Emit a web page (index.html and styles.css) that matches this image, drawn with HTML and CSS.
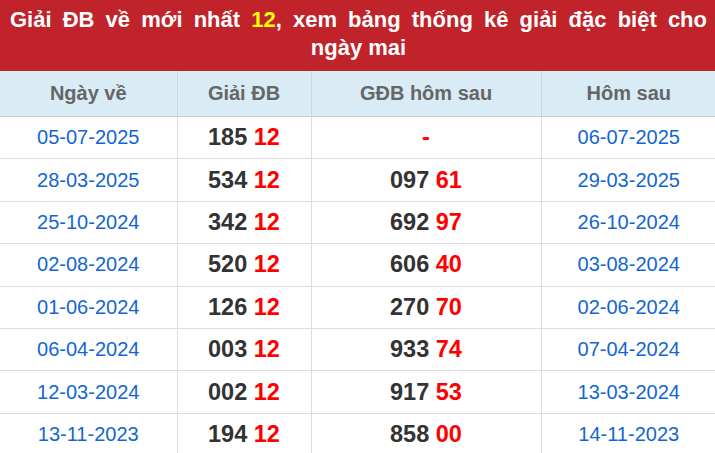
FILE: index.html
```html
<!DOCTYPE html>
<html lang="vi">
<head>
<meta charset="utf-8">
<title>Giải ĐB về mới nhất 12</title>
<link rel="stylesheet" href="styles.css">
</head>
<body>
<div class="box">
  <h2 class="title">Giải ĐB về mới nhất <span class="hl">12</span>, xem bảng thống kê giải đặc biệt cho <span class="nw">ngày mai</span></h2>
  <table class="stats">
    <colgroup>
      <col class="c1"><col class="c2"><col class="c3"><col class="c4">
    </colgroup>
    <thead>
      <tr><th>Ngày về</th><th>Giải ĐB</th><th>GĐB hôm sau</th><th>Hôm sau</th></tr>
    </thead>
    <tbody>
      <tr><td class="date">05-07-2025</td><td class="num">185 <span class="red">12</span></td><td class="num"><span class="red">-</span></td><td class="date">06-07-2025</td></tr>
      <tr><td class="date">28-03-2025</td><td class="num">534 <span class="red">12</span></td><td class="num">097 <span class="red">61</span></td><td class="date">29-03-2025</td></tr>
      <tr><td class="date">25-10-2024</td><td class="num">342 <span class="red">12</span></td><td class="num">692 <span class="red">97</span></td><td class="date">26-10-2024</td></tr>
      <tr><td class="date">02-08-2024</td><td class="num">520 <span class="red">12</span></td><td class="num">606 <span class="red">40</span></td><td class="date">03-08-2024</td></tr>
      <tr><td class="date">01-06-2024</td><td class="num">126 <span class="red">12</span></td><td class="num">270 <span class="red">70</span></td><td class="date">02-06-2024</td></tr>
      <tr><td class="date">06-04-2024</td><td class="num">003 <span class="red">12</span></td><td class="num">933 <span class="red">74</span></td><td class="date">07-04-2024</td></tr>
      <tr><td class="date">12-03-2024</td><td class="num">002 <span class="red">12</span></td><td class="num">917 <span class="red">53</span></td><td class="date">13-03-2024</td></tr>
      <tr><td class="date">13-11-2023</td><td class="num">194 <span class="red">12</span></td><td class="num">858 <span class="red">00</span></td><td class="date">14-11-2023</td></tr>
    </tbody>
  </table>
</div>
</body>
</html>
```

FILE: styles.css
```css
html, body {
  margin: 0;
  padding: 0;
  background: #fff;
}
body {
  font-family: "Liberation Sans", Arial, sans-serif;
  overflow: hidden;
}
.box {
  width: 716px;
}
.title {
  margin: 0;
  background: #c0232a;
  color: #fff;
  font-size: 22px;
  font-weight: bold;
  line-height: 28px;
  text-align: justify;
  text-align-last: center;
  padding: 6px 9px 9px 10px;
  height: 56px;
}
.nw {
  white-space: nowrap;
}
.hl {
  color: #ffff00;
}
.stats {
  width: 716px;
  border-collapse: collapse;
  table-layout: fixed;
}
.c1 { width: 177px; }
.c2 { width: 134px; }
.c3 { width: 230px; }
.c4 { width: 175px; }
.stats th {
  background: #d9ecf6;
  color: #666;
  font-size: 20px;
  font-weight: bold;
  height: 45px;
  padding: 0;
  border-left: 1px solid #cfd6da;
  border-bottom: 1px solid #cccccc;
}
.stats td {
  height: 41.4px;
  padding: 0;
  text-align: center;
  border-left: 1px solid #dddddd;
  border-bottom: 1px solid #dddddd;
}
.stats th:first-child,
.stats td:first-child {
  border-left: none;
}
.date {
  color: #1266d4;
  font-size: 20px;
}
.num {
  color: #333;
  font-size: 23.5px;
  font-weight: bold;
}
.red {
  color: #ff0000;
}
```
